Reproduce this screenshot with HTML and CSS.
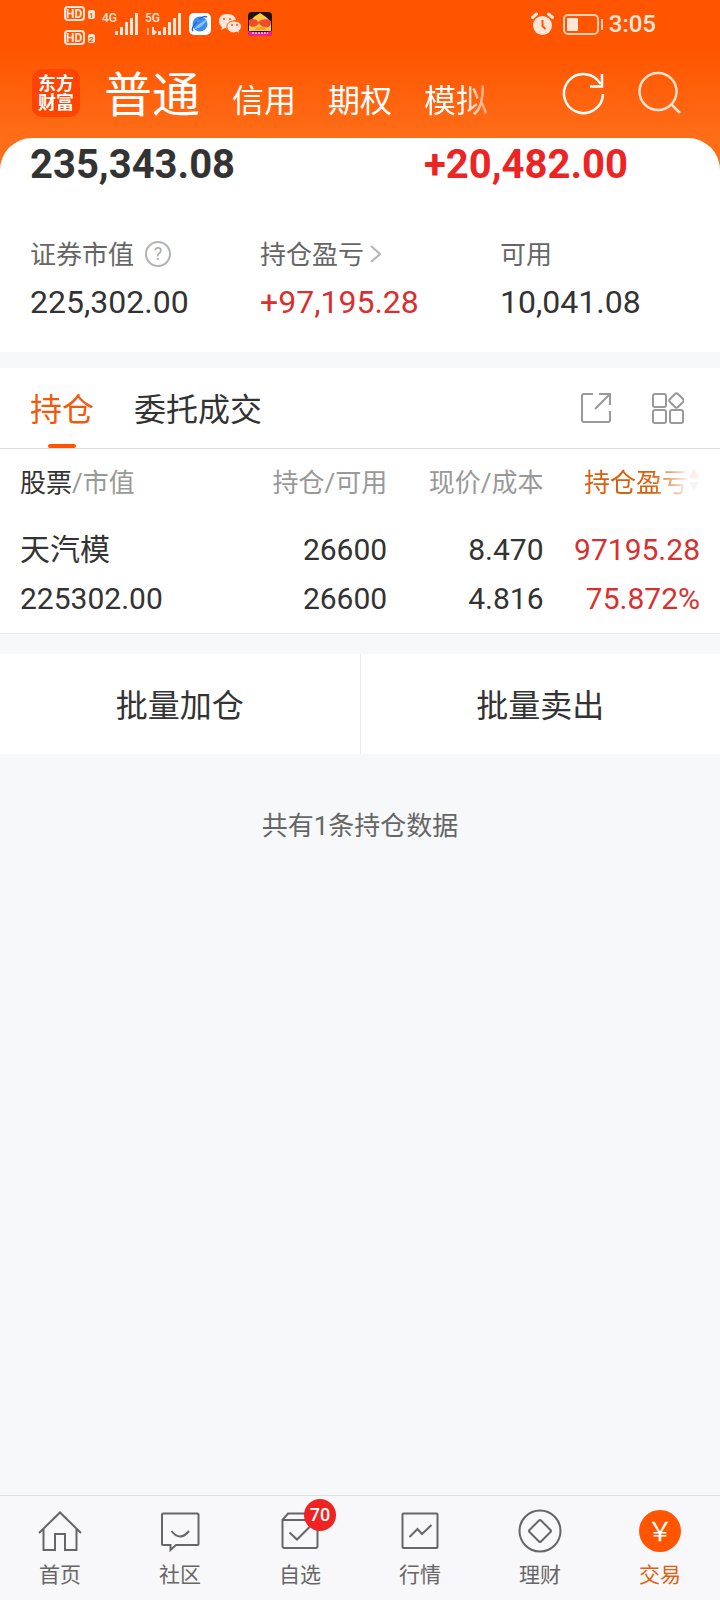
FILE: index.html
```
<!DOCTYPE html>
<html lang="zh-CN">
<head>
    <meta charset="UTF-8">
    <meta name="viewport" content="width=device-width, initial-scale=1.0">
    <title>普通交易 - 持仓</title>
    <link rel="stylesheet" href="styles.css">
</head>
<body>
    <header class="top">
        <div class="status-bar">
            <svg class="status-left" width="212" height="48" viewBox="62 0 212 48" aria-hidden="true">
                <g fill="none" stroke="#ffe6d8" stroke-width="2">
                    <rect x="65" y="7" width="19" height="13" rx="3"/>
                    <rect x="65" y="31" width="19" height="13" rx="3"/>
                </g>
                <g fill="#ffe6d8">
                    <text x="66" y="18" font-size="12" font-weight="700">HD</text>
                    <text x="66" y="42" font-size="12" font-weight="700">HD</text>
                    <rect x="88" y="10" width="7" height="9" rx="2"/>
                    <rect x="88" y="34" width="7" height="9" rx="2"/>
                    <text x="102" y="22" font-size="12" font-weight="500">4G</text>
                    <text x="145" y="22" font-size="12" font-weight="500">5G</text>
                    <path d="M115 31h3v4h-3zM120 27h3v8h-3zM125 22h3v13h-3zM130 18h3v17h-3zM135 13h3v22h-3z"/>
                    <path d="M158 31h3v4h-3zM163 27h3v8h-3zM168 22h3v13h-3zM173 18h3v17h-3zM178 13h3v22h-3z"/>
                    <path d="M152 27h2v3l3 2-3 3h-2z"/>
                    <path d="M147 28h2v7h-2z" opacity=".5"/>
                </g>
                <g fill="#ff5500">
                    <text x="89" y="18" font-size="8" font-weight="700">1</text>
                    <text x="89" y="42" font-size="8" font-weight="700">2</text>
                </g>
                <rect x="189" y="13" width="22" height="22" rx="5" fill="#fff"/>
                <circle cx="200" cy="24" r="7.500" fill="#3d8cf0"/>
                <path d="M194 29c4 0 11-4 13-10-5 3-10 6-13 10z" fill="#8cc8ff"/>
                <path d="M193 31c-2-2 1-6 4-9M207 17c-2-1-5 0-8 2" fill="none" stroke="#2567cc" stroke-width="1.5"/>
                <g fill="#ffe6d8">
                    <path d="M227 14c-5 0-8 3-8 7 0 3 1 4 3 6l-1 3 4-2c2 1 4 0 4 0 0-5 4-8 7-8-1-4-4-6-9-6z"/>
                    <path d="M234 21c-4 0-7 2-7 6 0 3 3 6 7 6l3-1 3 2-1-3c5-4 2-10-5-10z" stroke="#ff5500" stroke-width="1"/>
                </g>
                <g fill="#ff5500">
                    <circle cx="224" cy="19" r="1"/>
                    <circle cx="230" cy="19" r="1"/>
                    <circle cx="232" cy="25" r="1"/>
                    <circle cx="237" cy="25" r="1"/>
                </g>
                <rect x="248" y="12" width="24" height="24" rx="4" fill="#21120f"/>
                <path d="M249 31V21c3-1 5-5 8-6l3-2 3 2c3 2 6 4 8 8v8z" fill="#ffca42"/>
                <path d="M249 20c3-2 8-1 9 2 3-3 9-4 13-1 1 5-3 7-6 6-3 0-5-2-6-4-2 4-8 5-10 2z" fill="#f14b2d"/>
                <path d="M257 27h7l2 3h-11z" fill="#ff9c27"/>
                <path d="M248 31c8 2 16 2 24 0v1q0 4-4 4h-16q-4 0-4-4z" fill="#ed20a4"/>
                <path d="M252 33h16" stroke="#ffd2ef" stroke-width="1.5" stroke-dasharray="2 1"/>
            </svg>
            <div class="status-right">
                <svg width="74" height="24" viewBox="532 12 74 24" aria-hidden="true">
                    <circle cx="543.500" cy="25.500" r="9.500" fill="#ffe6d8"/>
                    <path d="M533.500 17.500l4-3.500M553.500 17.500l-4-3.500" stroke="#ffe6d8" stroke-width="3" stroke-linecap="round"/>
                    <path d="M543.500 20v6l3 3" fill="none" stroke="#ff5500" stroke-width="2"/>
                    <rect x="565" y="15" width="34" height="19" rx="4" fill="none" stroke="#ffcfb5" stroke-width="2"/>
                    <rect x="568" y="18" width="11" height="13" rx="1" fill="#ffe6d8"/>
                    <path d="M603 19v11" stroke="#ffcfb5" stroke-width="2"/>
                </svg>
                <time>3:05</time>
            </div>
        </div>
        <div class="title-bar">
            <div class="logo"><span>东方</span><span>财富</span></div>
            <nav class="account-tabs">
                <a href="#" class="current">普通</a>
                <a href="#">信用</a>
                <a href="#">期权</a>
                <a href="#" class="faded">模拟</a>
            </nav>
            <button class="icon-btn" aria-label="刷新">
                <svg width="44" height="44" viewBox="0 0 44 44" fill="none" stroke="#fff" stroke-width="2.500">
                    <path d="M41 23A19.500 19.500 0 1 1 38.500 13"/>
                    <path d="M40 3v12.500H28"/>
                </svg>
            </button>
            <button class="icon-btn" aria-label="搜索">
                <svg width="44" height="44" viewBox="0 0 44 44" fill="none" stroke="#ffe3d2" stroke-width="2.500">
                    <circle cx="20" cy="20.500" r="18.500"/>
                    <path d="M33 33l9 9"/>
                </svg>
            </button>
        </div>
    </header>

    <main>
        <section class="assets">
            <div class="totals">
                <strong>235,343.08</strong>
                <strong class="red">+20,482.00</strong>
            </div>
            <dl class="figures">
                <div>
                    <dt>证券市值
                        <button class="icon-btn help" aria-label="说明">
                            <svg width="26" height="26" viewBox="0 0 26 26">
                                <circle cx="13" cy="13" r="12" fill="none" stroke="#b3b3b3" stroke-width="2"/>
                                <text x="13" y="19" font-size="18" text-anchor="middle" fill="#aaa">?</text>
                            </svg>
                        </button>
                    </dt>
                    <dd>225,302.00</dd>
                </div>
                <div>
                    <dt>持仓盈亏
                        <svg class="chevron" width="12" height="18" viewBox="0 0 12 18" fill="none" stroke="#b3b3b3" stroke-width="2">
                            <path d="M1 1l9 8-9 8"/>
                        </svg>
                    </dt>
                    <dd class="red">+97,195.28</dd>
                </div>
                <div>
                    <dt>可用</dt>
                    <dd>10,041.08</dd>
                </div>
            </dl>
        </section>

        <section class="holdings">
            <div class="tabs">
                <button class="tab active">持仓</button>
                <button class="tab">委托成交</button>
                <div class="tools">
                    <button class="icon-btn" aria-label="分享">
                        <svg width="32" height="32" viewBox="0 0 32 32" fill="none" stroke="#999" stroke-width="2">
                            <path d="M13 2H4Q2 2 2 4v24q0 2 2 2h24q2 0 2-2v-9"/>
                            <path d="M19 2h11v11M30 2L15 17"/>
                        </svg>
                    </button>
                    <button class="icon-btn" aria-label="更多功能">
                        <svg width="32" height="32" viewBox="0 0 32 32" fill="none" stroke="#999" stroke-width="2">
                            <rect x="1" y="2" width="13" height="13" rx="2"/>
                            <rect x="1" y="18" width="13" height="13" rx="2"/>
                            <rect x="18" y="18" width="13" height="13" rx="2"/>
                            <path d="M23 2q1.500-1.500 3 0l5 5q1.500 1.500 0 3l-5 5q-1.500 1.500-3 0l-5-5q-1.500-1.500 0-3z"/>
                        </svg>
                    </button>
                </div>
            </div>
            <table>
                <thead>
                    <tr>
                        <th><b>股票</b>/市值</th>
                        <th>持仓/可用</th>
                        <th>现价/成本</th>
                        <th>
                            <span class="sort">持仓盈亏<svg width="12" height="24" viewBox="0 0 12 24"><path d="M6 1l5 9H1z" fill="#ff5500"/><path d="M6 23l5-9H1z" fill="#999"/></svg></span>
                        </th>
                    </tr>
                </thead>
                <tbody>
                    <tr>
                        <td>天汽模<br>225302.00</td>
                        <td>26600<br>26600</td>
                        <td>8.470<br>4.816</td>
                        <td class="red">97195.28<br>75.872%</td>
                    </tr>
                </tbody>
            </table>
        </section>

        <div class="batch">
            <button>批量加仓</button>
            <button>批量卖出</button>
        </div>
        <p class="count">共有1条持仓数据</p>
    </main>

    <nav class="bottom-nav">
        <a href="#">
            <svg width="44" height="44" viewBox="0 0 44 44">
                <path d="M1 24L22 3.500 43 24M5.500 20v21H17V25h10v16h11.500V20"/>
            </svg>
            首页
        </a>
        <a href="#">
            <svg width="44" height="44" viewBox="0 0 44 44">
                <path d="M5 4.500h34.500q1 0 1 1V35q0 1-1 1H18l-5.500 5V36H5q-1 0-1-1V5.500q0-1 1-1zM13.500 22q8.500 11 17.500 0"/>
            </svg>
            社区
        </a>
        <a href="#">
            <svg width="44" height="44" viewBox="0 0 44 44">
                <path d="M4.500 11h35v26q0 2-2 2h-31q-2 0-2-2zL10 4.500h24l5.500 6.500M11.500 23.500l7.500 7 13-13"/>
            </svg>
            <span class="badge">70</span>
            自选
        </a>
        <a href="#">
            <svg width="44" height="44" viewBox="0 0 44 44">
                <rect x="4.500" y="4.500" width="35" height="34.500" rx="1"/>
                <path d="M11.500 28l8-8 4.500 5 9.500-9"/>
            </svg>
            行情
        </a>
        <a href="#">
            <svg width="44" height="44" viewBox="0 0 44 44">
                <circle cx="22" cy="22" r="20.500"/>
                <path d="M21 11.500q1-1 2 0l9.500 9.500q1 1 0 2L23 32.500q-1 1-2 0L11.500 23q-1-1 0-2z"/>
            </svg>
            理财
        </a>
        <a href="#" class="current">
            <span class="yen">&#xFFE5;</span>
            交易
        </a>
    </nav>
</body>
</html>
```
FILE: styles.css
```
* {
    box-sizing: border-box;
}
body {
    margin: 0;
    min-height: 100vh;
    display: flex;
    flex-direction: column;
    background-color: #f7f8fa;
    color: #333;
    font-family: Roboto, 'Noto Sans CJK SC', sans-serif;
    font-size: 26px;
}
a {
    color: inherit;
    text-decoration: none;
}
button {
    padding: 0;
    border: none;
    background: none;
    color: inherit;
    font: inherit;
    cursor: pointer;
}
svg {
    display: block;
    flex: none;
}
main {
    flex: 1;
}
.icon-btn {
    flex: none;
}
.red {
    color: #d9302f;
}

/* orange header */
.top {
    padding-bottom: 32px;
    background: linear-gradient(#ff5500 50px, #ff6d18 138px);
    color: #fff;
}
.status-bar {
    display: flex;
    justify-content: space-between;
    height: 48px;
    padding: 0 64px 0 62px;
}
.status-right {
    display: flex;
    align-items: center;
    gap: 4px;
    color: #ffe6d8;
    font-size: 24px;
    font-weight: 500;
}
.title-bar {
    display: flex;
    align-items: center;
    gap: 32px;
    height: 90px;
    padding: 0 38px 0 32px;
}
.logo {
    display: flex;
    flex-direction: column;
    align-items: center;
    justify-content: center;
    width: 48px;
    height: 48px;
    margin-right: -8px;
    border-radius: 10px;
    background-color: #ff4400;
    font-size: 18px;
    font-weight: 700;
    line-height: 19px;
}
.account-tabs {
    display: flex;
    flex: 1;
    align-items: baseline;
    gap: 32px;
    padding-top: 10px;
    font-size: 32px;
    line-height: 56px;
    white-space: nowrap;
}
.account-tabs .current {
    font-size: 48px;
}
.faded {
    -webkit-mask-image: linear-gradient(90deg, #000 60%, rgba(0, 0, 0, 0.4));
    mask-image: linear-gradient(90deg, #000 60%, rgba(0, 0, 0, 0.4));
}

/* asset summary */
.assets {
    margin-top: -32px;
    padding: 0 30px 26px;
    border-radius: 32px 32px 0 0;
    background-color: #fff;
}
.totals {
    display: grid;
    grid-template-columns: 394fr 266fr;
    font-size: 40px;
    line-height: 54px;
}
.totals .red {
    color: #ed2424;
}
.figures {
    display: grid;
    grid-template-columns: 230fr 240fr 190fr;
    margin: 36px 0 0;
}
.figures dt {
    display: flex;
    align-items: center;
    height: 50px;
    padding-bottom: 2px;
    color: #666;
}
.figures dd {
    margin: 0;
    font-size: 32px;
    line-height: 48px;
}
.help {
    margin: 4px 0 0 11px;
}
.chevron {
    margin: 4px 0 0 6px;
}

/* holdings */
.holdings {
    margin-top: 16px;
    border-bottom: 1px solid #e8eaed;
    background-color: #fff;
}
.tabs {
    display: flex;
    align-items: center;
    gap: 40px;
    padding: 0 36px 0 30px;
    border-bottom: 1px solid #ddd;
}
.tab {
    position: relative;
    height: 80px;
    padding-bottom: 2px;
    font-size: 32px;
}
.tab.active {
    color: #f05a10;
}
.tab.active::after {
    content: '';
    position: absolute;
    bottom: 0;
    left: calc(50% - 14px);
    width: 28px;
    height: 4px;
    border-radius: 2px;
    background-color: #ff5500;
}
.tools {
    display: flex;
    gap: 40px;
    margin-left: auto;
}
table {
    width: 100%;
    padding: 0 20px;
    border-spacing: 0;
    table-layout: fixed;
}
th, td {
    padding: 0;
    text-align: right;
}
th {
    width: 23%;
    height: 62px;
    color: #999;
    font-weight: normal;
}
th:first-child, td:first-child {
    width: 30%;
    text-align: left;
}
th:nth-child(2) {
    width: 24%;
}
th b {
    color: #333;
    font-weight: normal;
}
td {
    padding: 14px 0 10px;
    font-size: 30px;
    line-height: 49px;
}
.sort {
    display: flex;
    align-items: center;
    justify-content: flex-end;
    color: #d9600f;
    -webkit-mask-image: linear-gradient(90deg, #000 70%, rgba(0, 0, 0, 0.1) 92%);
    mask-image: linear-gradient(90deg, #000 70%, rgba(0, 0, 0, 0.1) 92%);
}

.batch {
    display: flex;
    margin-top: 20px;
    background-color: #fff;
}
.batch button {
    flex: 1;
    height: 100px;
    padding-bottom: 2px;
    font-size: 32px;
}
.batch button + button {
    border-left: 1px solid #e8eaed;
}
.count {
    margin: 52px 0;
    color: #666;
    line-height: 40px;
    text-align: center;
}

/* bottom navigation */
.bottom-nav {
    position: sticky;
    bottom: 0;
    display: flex;
    height: 105px;
    border-top: 1px solid #dde0e3;
    background-color: #f8f8fa;
    color: #666;
    font-size: 21px;
    line-height: 32px;
}
.bottom-nav a {
    position: relative;
    display: flex;
    flex: 1;
    flex-direction: column;
    align-items: center;
    gap: 6px;
    padding-top: 13px;
}
.bottom-nav svg {
    fill: none;
    stroke: #666;
    stroke-width: 2;
}
.bottom-nav .current {
    color: #e85a0c;
}
.yen {
    width: 42px;
    height: 42px;
    margin: 1px;
    border-radius: 50%;
    background-color: #ff5500;
    color: #fff;
    font-family: 'Noto Sans CJK SC', sans-serif;
    font-size: 26px;
    line-height: 40px;
    text-align: center;
}
.badge {
    position: absolute;
    top: 3px;
    left: calc(50% + 4px);
    width: 32px;
    height: 32px;
    border-radius: 50%;
    background-color: #f02323;
    color: #fff;
    font-size: 18px;
    font-weight: 500;
    text-align: center;
}
```
